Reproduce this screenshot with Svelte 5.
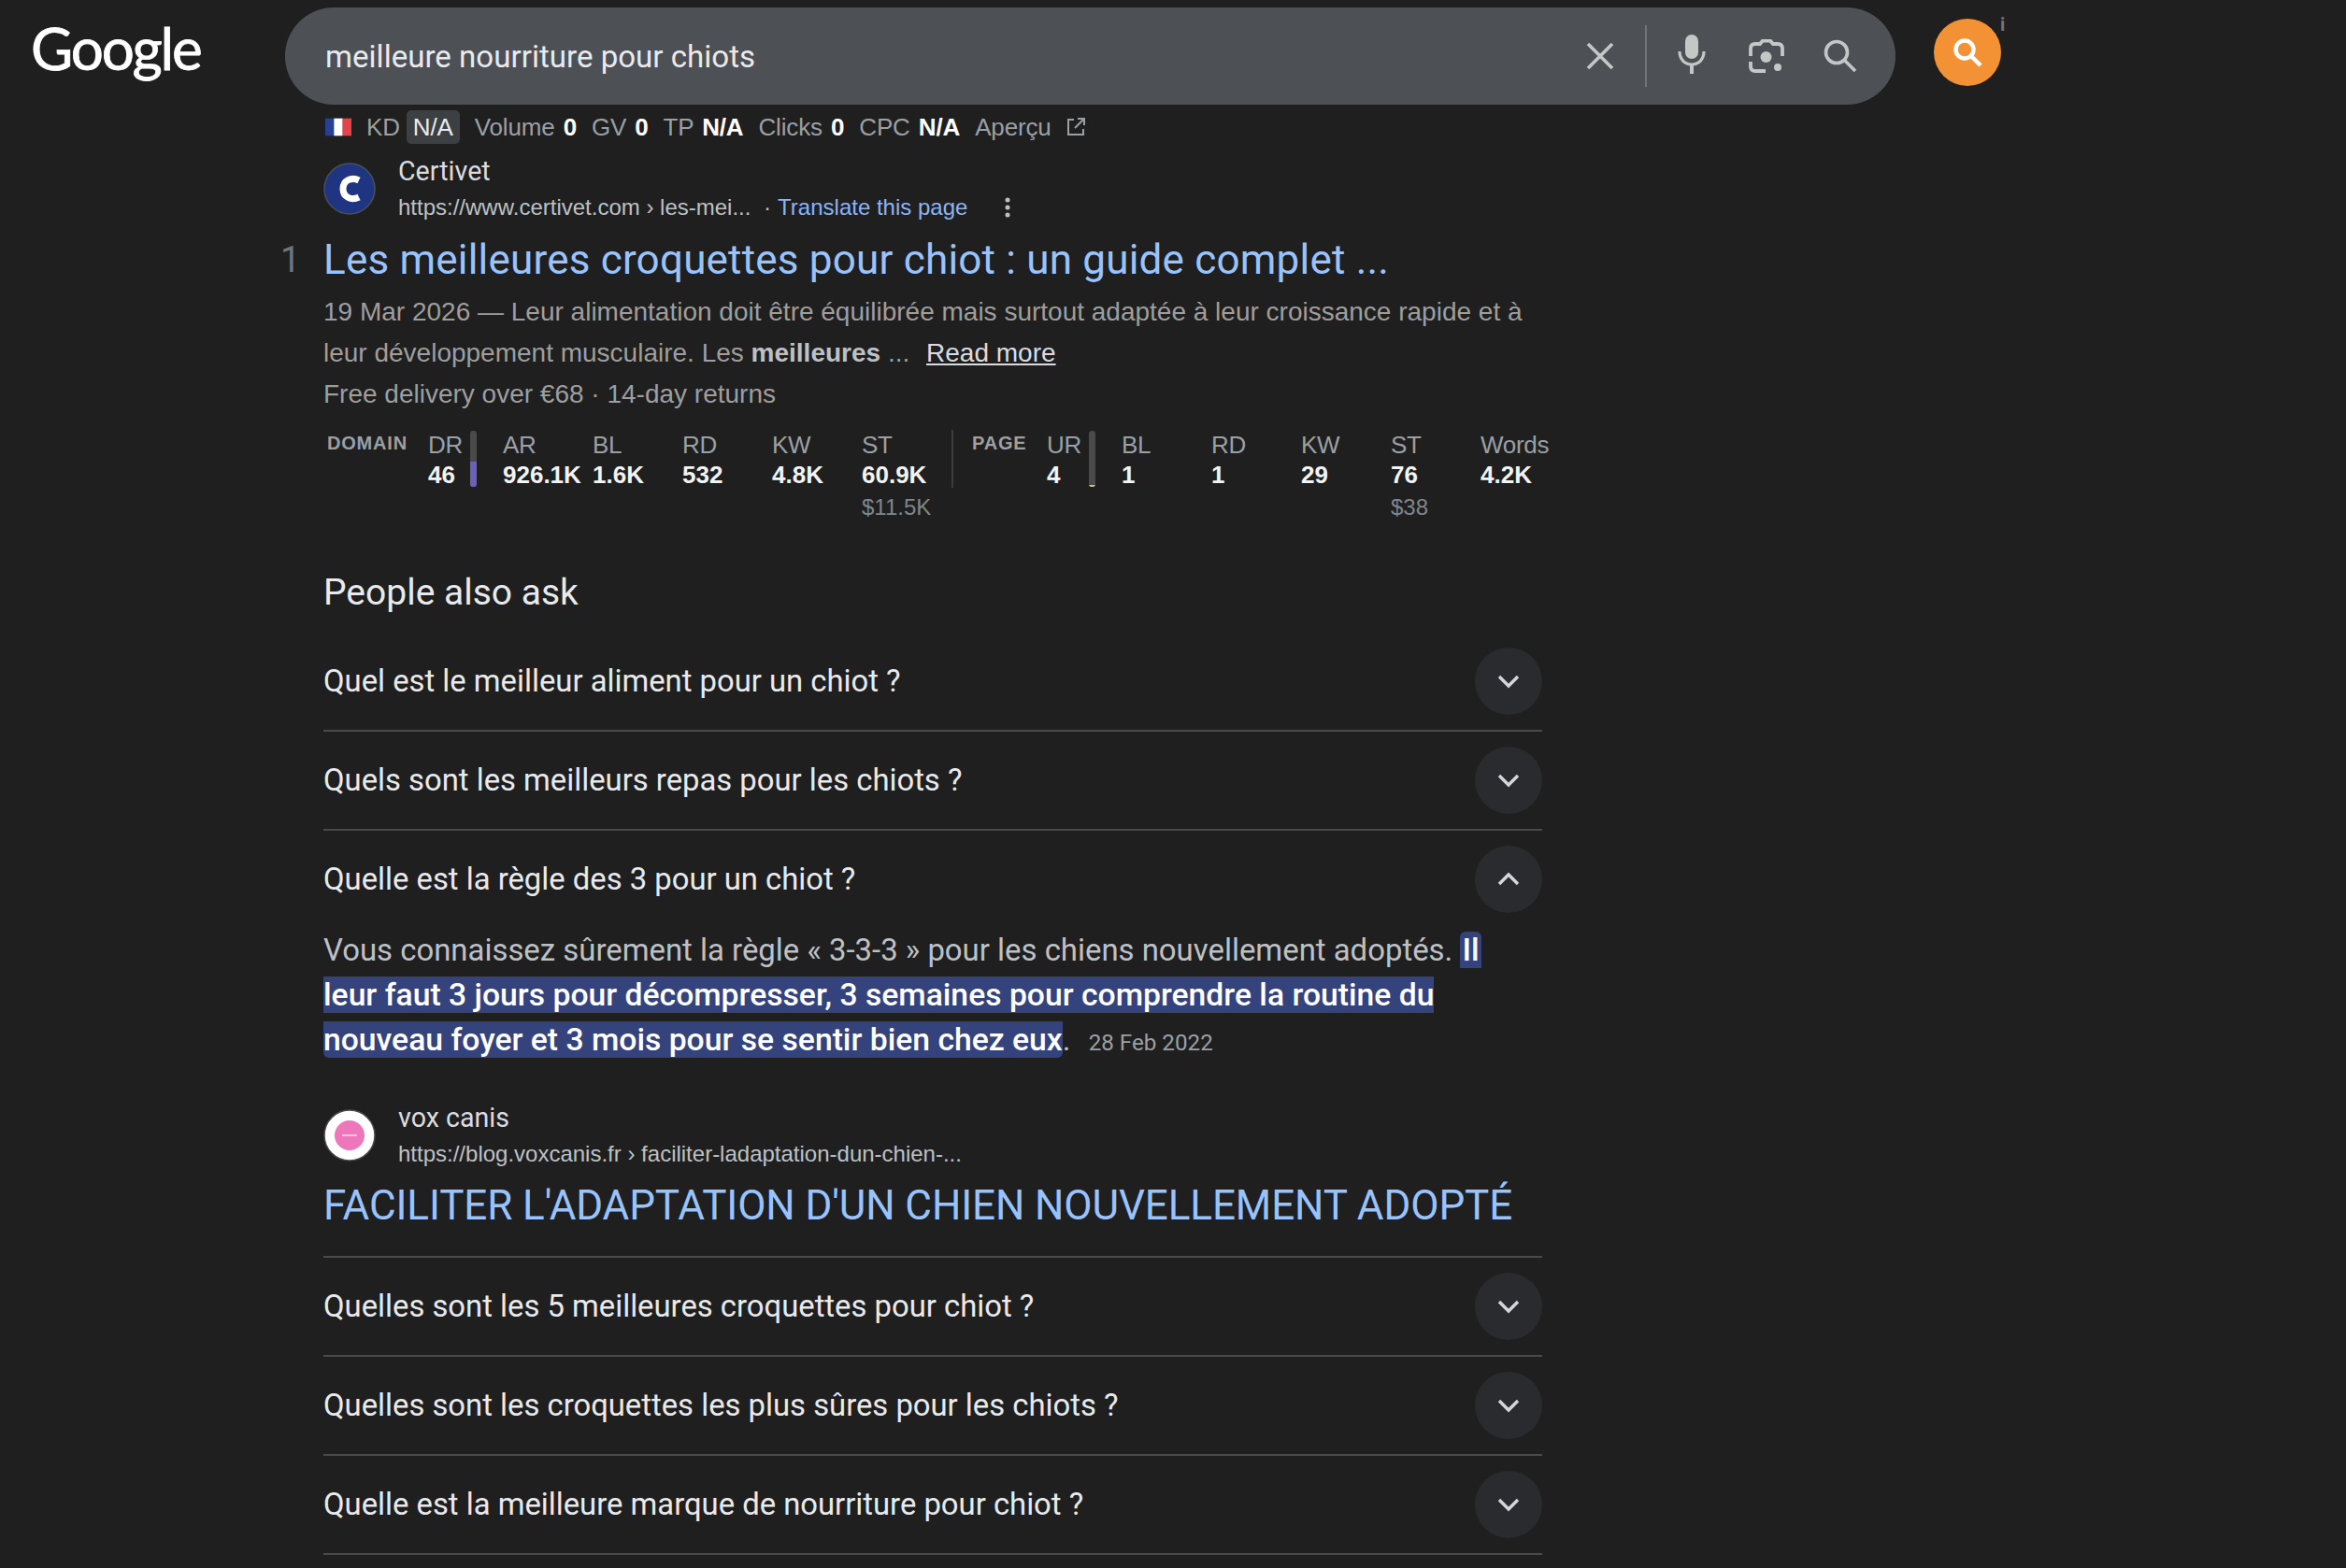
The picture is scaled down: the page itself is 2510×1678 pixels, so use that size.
<script lang="ts">
	const domainStats = [
		{ label: 'AR', value: '926.1K' },
		{ label: 'BL', value: '1.6K' },
		{ label: 'RD', value: '532' },
		{ label: 'KW', value: '4.8K' },
		{ label: 'ST', value: '60.9K', sub: '$11.5K' }
	];
	const pageStats = [
		{ label: 'BL', value: '1' },
		{ label: 'RD', value: '1' },
		{ label: 'KW', value: '29' },
		{ label: 'ST', value: '76', sub: '$38' },
		{ label: 'Words', value: '4.2K' }
	];
	const topQuestions = ['Quel est le meilleur aliment pour un chiot ?', 'Quels sont les meilleurs repas pour les chiots ?'];
	const bottomQuestions = [
		'Quelles sont les 5 meilleures croquettes pour chiot ?',
		'Quelles sont les croquettes les plus sûres pour les chiots ?',
		'Quelle est la meilleure marque de nourriture pour chiot ?'
	];
</script>

{#snippet chevron(up = false)}
	<span class="chev">
		<svg width="26" height="26" viewBox="0 0 26 26" fill="none" stroke="#d5d6dc" stroke-width="3.4">
			<path d={up ? 'M3 18 L13 8 L23 18' : 'M3 8 L13 18 L23 8'} />
		</svg>
	</span>
{/snippet}

<div class="page">
	<header>
		<div class="logo">Google</div>
		<div class="search">
			<span class="query">meilleure nourriture pour chiots</span>
			<svg class="ic-x" width="30" height="30" viewBox="0 0 30 30" stroke="#c4c7c5" stroke-width="3.6" fill="none"><path d="M2 2 L28 28 M28 2 L2 28" /></svg>
			<span class="vsep"></span>
			<svg class="ic-mic" width="30" height="42" viewBox="0 0 30 42" fill="none">
				<rect x="8" y="0" width="14" height="26" rx="7" fill="#c4c7c5" />
				<path d="M2 18 C2 27 8 32 15 32 C22 32 28 27 28 18" stroke="#c4c7c5" stroke-width="3.2" />
				<path d="M15 32 V42" stroke="#c4c7c5" stroke-width="4" />
			</svg>
			<svg class="ic-lens" width="38" height="36" viewBox="0 0 38 36" fill="none" stroke="#c4c7c5" stroke-width="3.8">
				<path d="M2 18 V10 Q2 5 7 5 H12 L15 1.5 H23 L26 5 H31 Q36 5 36 10 V18" />
				<path d="M2 24 V29 Q2 34 7 34 H18" />
				<circle cx="18.500" cy="19" r="6" fill="#c4c7c5" stroke="none" />
				<circle cx="31" cy="30" r="4" fill="#c4c7c5" stroke="none" />
			</svg>
			<svg class="ic-search" width="36" height="36" viewBox="0 0 36 36" fill="none" stroke="#c4c7c5" stroke-width="3.6">
				<circle cx="14" cy="14" r="11.500" />
				<path d="M22.500 22.500 L34 34" />
			</svg>
		</div>
		<div class="orange">
			<svg width="32" height="32" viewBox="0 0 32 32" fill="none" stroke="#fff" stroke-width="4.5">
				<circle cx="13" cy="13" r="9.500" />
				<path d="M20 20 L30 30" />
			</svg>
			<span class="info">i</span>
		</div>
	</header>

	<main>
		<div class="seo">
			<svg class="flag" width="28" height="20" viewBox="0 0 3 2"><rect width="1" height="2" fill="#27408f" /><rect x="1" width="1" height="2" fill="#fff" /><rect x="2" width="1" height="2" fill="#e8414a" /></svg>
			<span>KD</span>
			<span class="chip">N/A</span>
			<span>Volume <b>0</b></span>
			<span>GV <b>0</b></span>
			<span>TP <b>N/A</b></span>
			<span>Clicks <b>0</b></span>
			<span>CPC <b>N/A</b></span>
			<span class="apercu">Aperçu
				<svg width="22" height="22" viewBox="0 0 22 22" fill="none" stroke="#9aa0a6" stroke-width="2"><path d="M9 3 H3 V19 H19 V13 M13 2 H20 V9 M20 2 L10 12" /></svg>
			</span>
		</div>

		<div class="source first">
			<svg class="favicon" width="56" height="56" viewBox="0 0 56 56">
				<circle cx="28" cy="28" r="27" fill="#1f3581" stroke="#4a4f5a" stroke-width="1.500" />
				<path d="M38 19 C30 15 21 19 21 28 C21 37 30 41 38 37" fill="none" stroke="#fff" stroke-width="7" />
			</svg>
			<div class="src-text">
				<div class="site">Certivet</div>
				<div class="url">
					https://www.certivet.com › les-mei...
					<span class="dot">·</span>
					<span class="translate">Translate this page</span>
					<svg class="kebab" width="6" height="24" viewBox="0 0 6 24" fill="#bdc1c6"><circle cx="3" cy="4" r="2.500" /><circle cx="3" cy="12" r="2.500" /><circle cx="3" cy="20" r="2.500" /></svg>
				</div>
			</div>
		</div>

		<h2 class="title">
			<span class="rank">1</span>
			Les meilleures croquettes pour chiot : un guide complet ...
		</h2>
		<p class="desc">
			19 Mar 2026 — Leur alimentation doit être équilibrée mais surtout adaptée à leur croissance rapide et à<br />
			leur développement musculaire. Les <b>meilleures</b> ... <u>Read more</u><br />
			Free delivery over €68 · 14-day returns
		</p>

		<div class="metrics">
			<div class="tag tag-domain">DOMAIN</div>
			<div class="stat dr">
				<span class="lbl">DR</span><span class="val">46</span>
			</div>
			<div class="bar"><div class="fill" style="height: 45%"></div></div>
			{#each domainStats as s}
				<div class="stat">
					<span class="lbl">{s.label}</span><span class="val">{s.value}</span>
					{#if s.sub}<span class="sub">{s.sub}</span>{/if}
				</div>
			{/each}
			<div class="msep"></div>
			<div class="tag tag-page">PAGE</div>
			<div class="stat dr">
				<span class="lbl">UR</span><span class="val">4</span>
			</div>
			<div class="bar"><div class="fill lime" style="height: 4%"></div></div>
			{#each pageStats as s}
				<div class="stat">
					<span class="lbl">{s.label}</span><span class="val">{s.value}</span>
					{#if s.sub}<span class="sub">{s.sub}</span>{/if}
				</div>
			{/each}
		</div>

		<h3 class="paa">People also ask</h3>

		{#each topQuestions as q}
			<div class="row"><span>{q}</span>{@render chevron()}</div>
		{/each}
		<div class="row open"><span>Quelle est la règle des 3 pour un chiot ?</span>{@render chevron(true)}</div>

		<div class="answer">
			Vous connaissez sûrement la règle « 3-3-3 » pour les chiens nouvellement adoptés. <mark class="r-top">Il</mark><br />
			<mark>leur faut 3 jours pour décompresser, 3 semaines pour comprendre la routine du</mark><br />
			<mark class="r-bottom">nouveau foyer et 3 mois pour se sentir bien chez eux</mark>. <span class="date">28 Feb 2022</span>
		</div>

		<div class="source second-src">
			<svg class="favicon" width="56" height="56" viewBox="0 0 56 56">
				<circle cx="28" cy="28" r="27" fill="#fff" stroke="#4a4a4a" stroke-width="1.500" />
				<circle cx="28" cy="28" r="16" fill="#ee77bb" />
				<rect x="20" y="27" width="16" height="2" fill="#f6bfdc" />
			</svg>
			<div class="src-text">
				<div class="site">vox canis</div>
				<div class="url">https://blog.voxcanis.fr › faciliter-ladaptation-dun-chien-...</div>
			</div>
		</div>
		<h2 class="title second">FACILITER L'ADAPTATION D'UN CHIEN NOUVELLEMENT ADOPTÉ</h2>

		<div class="rule"></div>
		{#each bottomQuestions as q}
			<div class="row"><span>{q}</span>{@render chevron()}</div>
		{/each}
	</main>
</div>

<style>
	:global(body) {
		margin: 0;
		background: #1f1f1f;
	}

	.page {
		width: 2510px;
		height: 1678px;
		overflow: hidden;
		font-family: Roboto, 'Liberation Sans', sans-serif;
		color: #e8eaed;
	}

	header {
		display: flex;
		align-items: flex-start;
		padding-top: 8px;
		height: 104px;
	}

	.logo {
		width: 305px;
		box-sizing: border-box;
		padding-left: 33px;
		font-family: Lato, sans-serif;
		font-size: 62px;
		line-height: 87px;
		letter-spacing: -2.200px;
		color: #fff;
		-webkit-text-stroke: 0.8px #fff;
	}

	.search {
		width: 1723px;
		height: 104px;
		box-sizing: border-box;
		border-radius: 52px;
		background: #4d5156;
		display: flex;
		align-items: center;
		padding-left: 43px;
	}

	.query {
		flex: 1;
		font-size: 33.1px;
		color: #e8eaed;
	}

	.ic-x {
		margin-right: 33px;
	}

	.vsep {
		width: 2px;
		height: 66px;
		background: #70757a;
		margin-right: 33px;
	}

	.ic-mic {
		margin-right: 46px;
		margin-bottom: 4px;
	}

	.ic-lens {
		margin-right: 42px;
	}

	.ic-search {
		margin-right: 41px;
	}

	.orange {
		position: relative;
		width: 72px;
		height: 72px;
		margin: 12px 0 0 41px;
		border-radius: 50%;
		background: #f39234;
		display: flex;
		align-items: center;
		justify-content: center;
	}

	.info {
		position: absolute;
		left: 71px;
		top: -6px;
		font-size: 20px;
		color: #70757a;
		font-weight: 700;
	}

	main {
		width: 1304px;
		margin-left: 346px;
	}

	.seo {
		display: flex;
		align-items: center;
		height: 42px;
		margin-top: 3px;
		font-family: 'Liberation Sans', Arial, sans-serif;
		font-size: 26px;
		letter-spacing: -0.15px;
		color: #9aa0a6;
		gap: 16px;
	}

	.seo b {
		color: #fff;
		margin-left: 2px;
	}

	.flag {
		margin-left: 2px;
	}

	.chip {
		background: #3c4043;
		color: #e8eaed;
		border-radius: 5px;
		padding: 5px 7px;
		margin-left: -9px;
		line-height: 26px;
	}

	.apercu {
		display: inline-flex;
		align-items: center;
		gap: 15px;
	}

	.source {
		display: flex;
		align-items: center;
		gap: 24px;
	}

	.source.first {
		margin-top: 9px;
	}

	.second-src {
		margin-top: 39px;
	}

	.src-text {
		display: flex;
		flex-direction: column;
		gap: 6px;
	}

	.site {
		font-size: 28.6px;
		line-height: 34px;
		color: #dadce0;
	}

	.url {
		font-family: 'Liberation Sans', Arial, sans-serif;
		font-size: 24px;
		line-height: 32px;
		color: #bdc1c6;
		display: flex;
		align-items: center;
		gap: 7px;
		white-space: pre;
	}

	.translate {
		color: #8ab4f8;
	}

	.kebab {
		margin-left: 33px;
	}

	.title {
		position: relative;
		margin: 12px 0 0;
		font-size: 44px;
		line-height: 56px;
		font-weight: 400;
		letter-spacing: 0.2px;
		color: #99c3ff;
		white-space: nowrap;
	}

	.rank {
		position: absolute;
		left: -46px;
		top: 0;
		font-size: 38px;
		color: #70757a;
	}

	.desc {
		margin: 6px 0 0;
		font-family: 'Liberation Sans', Arial, sans-serif;
		font-size: 28px;
		line-height: 44px;
		color: #9e9e9e;
		white-space: nowrap;
	}

	.desc b {
		color: #bdc1c6;
	}

	.desc u {
		color: #dadce0;
		margin-left: 10px;
	}

	.metrics {
		display: flex;
		margin-top: 16px;
		margin-left: 4px;
		font-family: 'Liberation Sans', Arial, sans-serif;
		height: 92px;
		white-space: nowrap;
	}

	.tag {
		flex: none;
		font-size: 20px;
		font-weight: 700;
		color: #9aa0a6;
		line-height: 28px;
		letter-spacing: 0.8px;
	}

	.tag-domain {
		width: 108px;
	}

	.tag-page {
		width: 80px;
	}

	.stat {
		flex: none;
		width: 96px;
		display: flex;
		flex-direction: column;
	}

	.stat.dr {
		width: 45px;
	}

	.lbl {
		font-size: 26px;
		line-height: 32px;
		color: #9aa0a6;
		letter-spacing: -0.3px;
	}

	.val {
		font-size: 26px;
		font-weight: 700;
		line-height: 32px;
		color: #f1f3f4;
	}

	.sub {
		font-size: 24px;
		line-height: 38px;
		color: #80868b;
	}

	.bar {
		flex: none;
		position: relative;
		width: 7px;
		height: 60px;
		margin: 1px 28px 0 0;
		border-radius: 3px;
		background: #4a4a4a;
		overflow: hidden;
	}

	.fill {
		position: absolute;
		left: 0;
		right: 0;
		bottom: 0;
		background: #6b5fc0;
	}

	.fill.lime {
		background: #c9c96b;
	}

	.msep {
		flex: none;
		width: 2px;
		height: 62px;
		background: #3c3c3c;
		margin-right: 20px;
	}

	.paa {
		margin: 57px 0 18px;
		font-size: 39px;
		line-height: 50px;
		font-weight: 400;
		color: #e8eaed;
	}

	.row {
		height: 106px;
		box-sizing: border-box;
		border-bottom: 2px solid #4a4a4a;
		display: flex;
		align-items: center;
		justify-content: space-between;
		font-size: 32.8px;
		color: #e8eaed;
	}

	.row.open {
		border-bottom: 0;
		height: 104px;
	}

	.chev {
		width: 72px;
		height: 72px;
		border-radius: 50%;
		background: #2a2b2e;
		display: flex;
		align-items: center;
		justify-content: center;
	}

	.answer {
		font-size: 32.9px;
		line-height: 48px;
		color: #bdc1c6;
		white-space: nowrap;
	}

	mark {
		background: #35437c;
		color: #fff;
		font-weight: 500;
		font-size: 33.7px;
	}

	.r-top {
		border-radius: 6px 6px 0 0;
		padding: 0 2px;
	}

	.r-bottom {
		border-radius: 0 0 6px 6px;
	}

	.date {
		font-size: 24.2px;
		color: #9aa0a6;
		margin-left: 11px;
	}

	.title.second {
		margin-top: 11px;
		letter-spacing: -0.1px;
	}

	.rule {
		height: 2px;
		margin-top: 26px;
		background: #4a4a4a;
	}
</style>
